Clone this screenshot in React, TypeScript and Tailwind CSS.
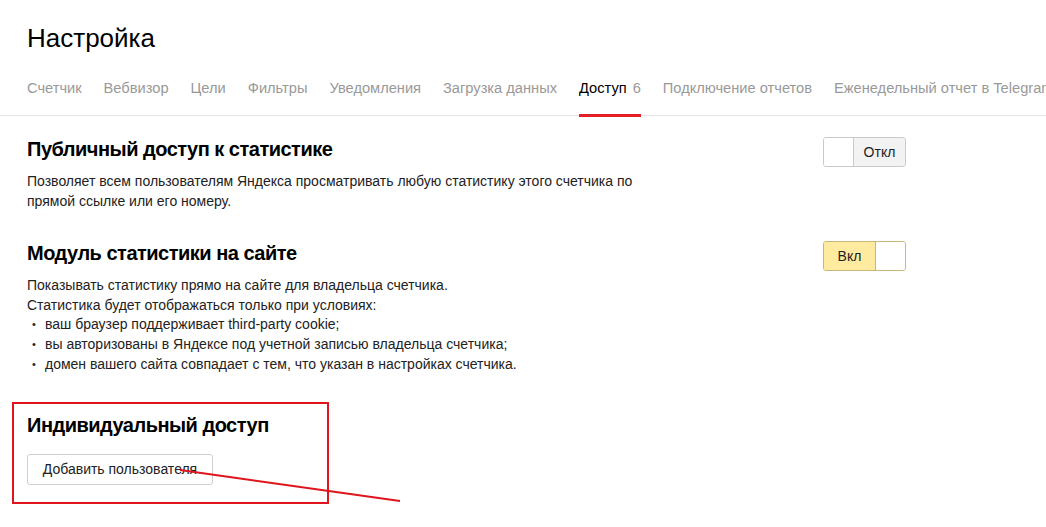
import React from 'react';

const tabs = [
  { label: 'Счетчик' },
  { label: 'Вебвизор' },
  { label: 'Цели' },
  { label: 'Фильтры' },
  { label: 'Уведомления' },
  { label: 'Загрузка данных' },
  { label: 'Доступ', count: '6', active: true },
  { label: 'Подключение отчетов' },
  { label: 'Еженедельный отчет в Telegram' },
];

type ToggleProps = { on: boolean };

const Toggle: React.FC<ToggleProps> = ({ on }) => {
  if (on) {
    return (
      <div className="flex h-[30px] w-[83px] rounded-[3px] border border-[#c8b77a] overflow-hidden">
        <div className="flex-1 bg-[#ffeba0] flex items-center justify-center text-[14px] text-[#222]">Вкл</div>
        <div className="w-[30px] bg-white border-l border-[#c8b77a]" />
      </div>
    );
  }
  return (
    <div className="flex h-[30px] w-[83px] rounded-[3px] border border-[#c9c9c9] overflow-hidden">
      <div className="w-[30px] bg-white border-r border-[#c9c9c9]" />
      <div className="flex-1 bg-[#f2f2f2] flex items-center justify-center text-[14px] text-[#222]">Откл</div>
    </div>
  );
};

const bullets = [
  'ваш браузер поддерживает third-party cookie;',
  'вы авторизованы в Яндексе под учетной записью владельца счетчика;',
  'домен вашего сайта совпадает с тем, что указан в настройках счетчика.',
];

export default function App() {
  return (
    <div className="relative w-[1046px] h-[527px] bg-white overflow-hidden font-['Liberation_Sans',Arial,sans-serif] text-[#000]">
      <h1 className="pl-[27px] pt-[22px] text-[26px] leading-[32px] text-black">Настройка</h1>

      <nav className="mt-[23px] border-b border-[#e6e6e6] pl-[27px] flex whitespace-nowrap">
        {tabs.map((t) => (
          <div
            key={t.label}
            className={`mr-[22px] pb-[17px] pt-[2px] text-[14.65px] leading-[18px] border-b-[3px] -mb-[2px] ${
              t.active ? 'border-[#e31e24] text-black' : 'border-transparent text-[#999]'
            }`}
          >
            {t.label}
            {t.count && <span className="ml-[6px] text-[#999]">{t.count}</span>}
          </div>
        ))}
      </nav>

      <section className="pl-[27px] pr-[140px] pt-[21px] flex justify-between">
        <div>
          <h2 className="text-[20px] leading-[24px] font-bold tracking-[-0.5px] text-[#000]">Публичный доступ к статистике</h2>
          <p className="mt-[11px] text-[14px] leading-[19.5px] text-[#222] w-[620px]">
            Позволяет всем пользователям Яндекса просматривать любую статистику этого счетчика по прямой ссылке или его номеру.
          </p>
        </div>
        <div>
          <Toggle on={false} />
        </div>
      </section>

      <section className="pl-[27px] pr-[140px] pt-[30px] flex justify-between">
        <div>
          <h2 className="text-[20px] leading-[24px] font-bold tracking-[-0.5px] text-[#000]">Модуль статистики на сайте</h2>
          <div className="mt-[11px] text-[14px] leading-[19.7px] text-[#222]">
            <p>Показывать статистику прямо на сайте для владельца счетчика.</p>
            <p>Статистика будет отображаться только при условиях:</p>
            <ul className="pl-[5px]">
              {bullets.map((b) => (
                <li key={b} className="flex items-center">
                  <span className="w-[13px] text-[11px]">•</span>
                  {b}
                </li>
              ))}
            </ul>
          </div>
        </div>
        <div>
          <Toggle on={true} />
        </div>
      </section>

      <section className="ml-[12px] mt-[27px] w-[317px] h-[102px] border-2 border-[#e0141c] pl-[13px] pt-[9px]">
        <h2 className="text-[20px] leading-[24px] font-bold tracking-[-0.5px] text-[#000]">Индивидуальный доступ</h2>
        <button className="mt-[17px] h-[31px] w-[186px] rounded-[3px] border border-[#d0d0d0] bg-white text-[14px] text-[#222]">
          Добавить пользователя
        </button>
      </section>

      <svg className="absolute left-0 top-0 pointer-events-none" width="1046" height="527">
        <line x1="180" y1="470" x2="400" y2="501" stroke="#e0141c" strokeWidth="2" />
      </svg>
    </div>
  );
}
